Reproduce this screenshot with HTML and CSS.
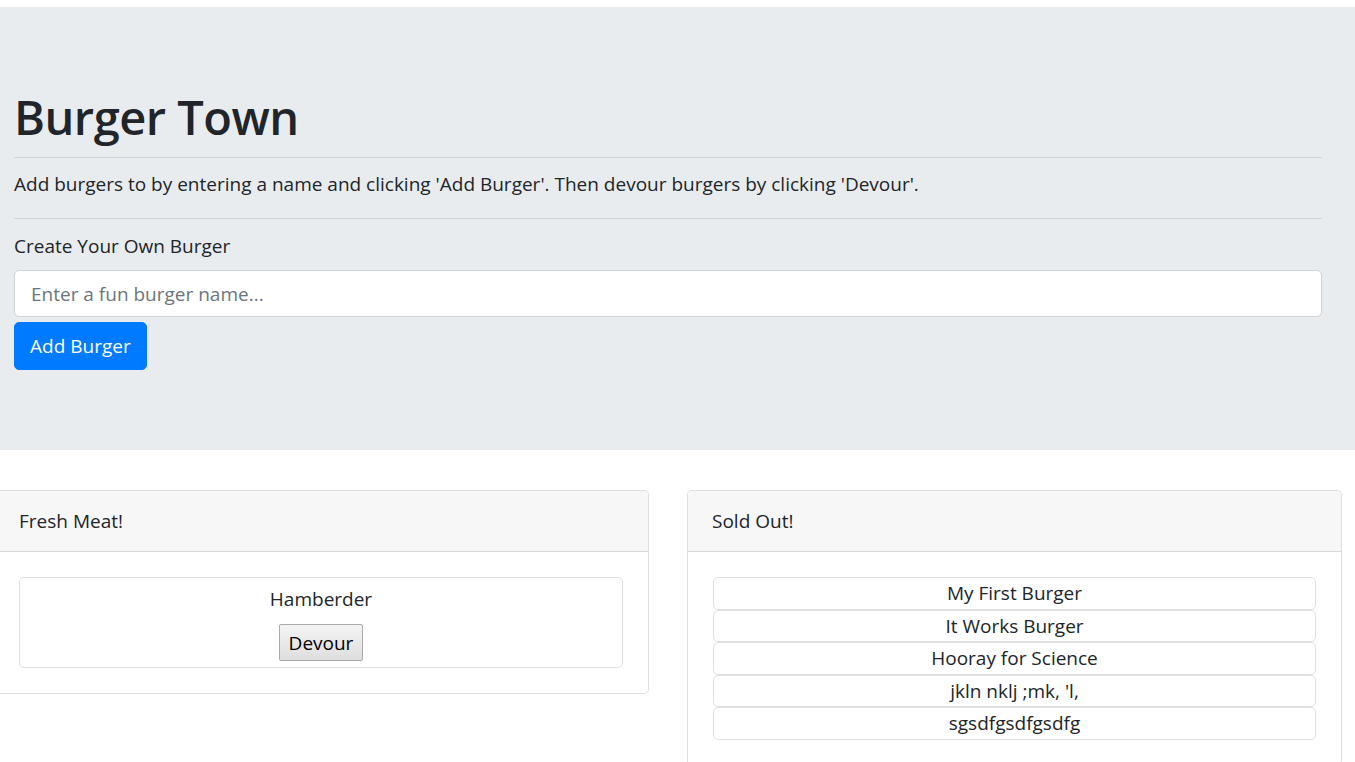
FILE: index.html
```html
<!DOCTYPE html>
<html lang="en">
<head>
<meta charset="utf-8">
<title>Burger Town</title>
<link rel="stylesheet" href="styles.css">
</head>
<body>
<div class="jumbotron">
  <h1 class="title">Burger Town</h1>
  <hr class="rule rule-top">
  <p class="lead">Add burgers to by entering a name and clicking 'Add Burger'. Then devour burgers by clicking 'Devour'.</p>
  <hr class="rule rule-bottom">
  <form class="burger-form">
    <label class="form-label" for="burger">Create Your Own Burger</label>
    <input class="form-input" id="burger" type="text" placeholder="Enter a fun burger name...">
    <button class="btn-primary" type="button">Add Burger</button>
  </form>
</div>
<div class="cards">
  <div class="card">
    <div class="card-header">Fresh Meat!</div>
    <div class="card-body">
      <div class="burger-item">
        <div class="burger-name">Hamberder</div>
        <button class="btn-devour" type="button">Devour</button>
      </div>
    </div>
  </div>
  <div class="card">
    <div class="card-header">Sold Out!</div>
    <div class="card-body card-body-right">
      <div class="eaten">My First Burger</div>
      <div class="eaten">It Works Burger</div>
      <div class="eaten">Hooray for Science</div>
      <div class="eaten">jkln nklj ;mk, 'l,</div>
      <div class="eaten">sgsdfgsdfgsdfg</div>
    </div>
  </div>
</div>
</body>
</html>
```

FILE: styles.css
```css
html, body {
  margin: 0;
  padding: 0;
  background: #fff;
}
body {
  font-family: "Open Sans", "Noto Sans", sans-serif;
  font-size: 19px;
  line-height: 30px;
  color: #212529;
}
.jumbotron {
  margin-top: 7px;
  background: #e9ecef;
  padding: 80px 33px 80px 14px;
}
.title {
  margin: 0;
  font-size: 47px;
  line-height: 60px;
  font-weight: 600;
  letter-spacing: -0.5px;
}
.rule {
  border: 0;
  border-top: 1px solid rgba(0, 0, 0, 0.1);
  margin: 0;
  height: 0;
}
.rule-top {
  margin-top: 10px;
}
.lead {
  margin: 11px 0 19px;
}
.burger-form {
  display: flex;
  flex-direction: column;
  align-items: flex-start;
  margin-top: 12px;
}
.form-label {
  display: block;
  margin-bottom: 9px;
}
.form-input {
  box-sizing: border-box;
  width: 100%;
  height: 47px;
  padding: 7px 16px;
  font: inherit;
  color: #495057;
  background: #fff;
  border: 1px solid #ced4da;
  border-radius: 5px;
  outline: none;
}
.form-input::placeholder {
  color: #6c757d;
}
.btn-primary {
  margin-top: 5px;
  box-sizing: border-box;
  height: 48px;
  padding: 0 15px;
  font: inherit;
  color: #fff;
  background: #007bff;
  border: 1px solid #007bff;
  border-radius: 5px;
}
.cards {
  display: flex;
  gap: 38px;
  margin: 40px 0 0 -6px;
  align-items: flex-start;
}
.card {
  flex: 0 0 655px;
  box-sizing: border-box;
  border: 1px solid rgba(0, 0, 0, 0.125);
  border-radius: 5px;
  background: #fff;
}
.card-header {
  padding: 15px 24px;
  background: #f7f7f7;
  border-bottom: 1px solid rgba(0, 0, 0, 0.125);
  border-radius: 5px 5px 0 0;
}
.card-body {
  padding: 25px 25px 25px 24px;
}
.card-body-right {
  padding: 25px 25px 25px 24px;
}
.card-body-right .eaten:first-child {
  margin-left: 1px;
}
.burger-item {
  border: 1px solid #e0e0e0;
  border-radius: 5px;
  padding: 6px 0 6px;
  text-align: center;
}
.burger-name {
  line-height: 30px;
}
.btn-devour {
  margin-top: 10px;
  height: 37px;
  padding: 0 9px;
  font: inherit;
  color: #000;
  background: linear-gradient(#f4f4f4, #dedede);
  border: 1px solid #a9a9a9;
  border-radius: 2px;
}
.eaten {
  margin-left: 1px;
  border: 1px solid #e0e0e0;
  border-radius: 5px;
  line-height: 29.5px;
  padding-top: 1px;
  text-align: center;
}
```
